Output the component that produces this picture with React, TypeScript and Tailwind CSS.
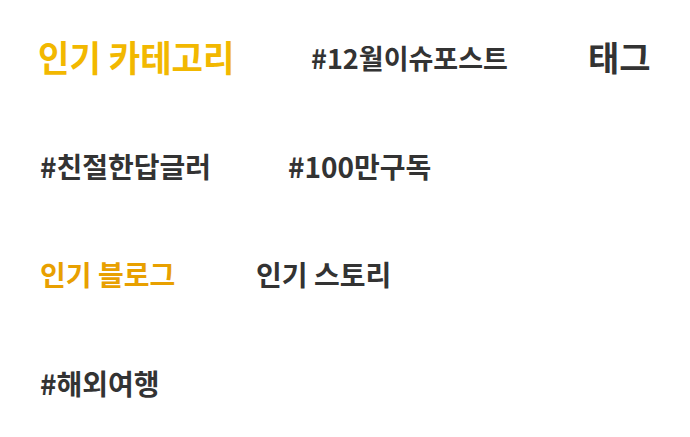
const font = { fontFamily: '"Noto Sans CJK KR", "Noto Sans", sans-serif' };

export default function App() {
  return (
    <div
      className="w-[690px] h-[437px] bg-white pt-[3px] text-[#333333] font-bold"
      style={font}
    >
      {/* top row: headings */}
      <div className="h-[108.5px] flex items-center pl-[38px]">
        <div className="w-[273px]">
          <span className="inline-block text-[36px] leading-none text-[#f2b800] scale-x-[0.95] origin-left whitespace-nowrap">
            인기 카테고리
          </span>
        </div>
        <div className="w-[277px] text-[27px] leading-none whitespace-nowrap">#12월이슈포스트</div>
        <div className="text-[34px] leading-none whitespace-nowrap">태그</div>
      </div>

      <div className="h-[108.5px] flex items-center pl-[40px] text-[28px] leading-none">
        <div className="w-[248px] whitespace-nowrap">#친절한답글러</div>
        <div className="whitespace-nowrap">#100만구독</div>
      </div>

      <div className="h-[108.5px] flex items-center pl-[40px] text-[28px] leading-none">
        <div className="w-[216px] whitespace-nowrap text-[#e8a000]">인기 블로그</div>
        <div className="whitespace-nowrap">인기 스토리</div>
      </div>

      <div className="h-[108.5px] flex items-center pl-[40px] text-[28px] leading-none">
        <div className="whitespace-nowrap">#해외여행</div>
      </div>
    </div>
  );
}
